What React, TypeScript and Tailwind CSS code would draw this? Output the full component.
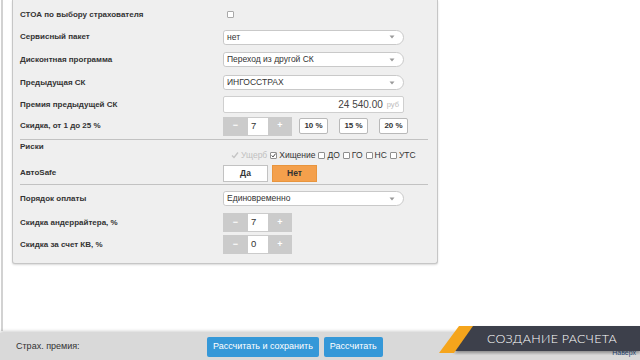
import React from 'react';

const font = { fontFamily: '"Liberation Sans", Arial, sans-serif' };

function Label({ children }: { children: React.ReactNode }) {
    return <div className="w-[203px] shrink-0 text-[8px] font-bold text-[#333]">{children}</div>;
}

function Caret() {
    return (
        <svg width="6" height="4" viewBox="0 0 6 4">
            <path d="M0.5 0.5 L5.5 0.5 L3 3.5 Z" fill="#9a9a9a" />
        </svg>
    );
}

function Select({ value }: { value: string }) {
    return (
        <div className="flex h-[15px] w-[181px] items-center justify-between rounded-l-[3px] rounded-r-[8px] border border-[#c9c9c9] bg-white pl-[3px] pr-[8px] text-[8.5px] text-[#333]">
            <span>{value}</span>
            <Caret />
        </div>
    );
}

function Spinner({ value }: { value: string }) {
    return (
        <div className="flex h-[19px]">
            <div className="flex w-[25px] items-center justify-center bg-[#cbcbcb] text-[9px] font-bold text-white">−</div>
            <div className="flex w-[20px] items-center border-y border-[#cbcbcb] bg-white pl-[3px] text-[9.5px] text-[#333]">
                {value}
            </div>
            <div className="flex w-[24px] items-center justify-center bg-[#cbcbcb] text-[9px] font-bold text-white">+</div>
        </div>
    );
}

function Box({ checked, disabled }: { checked?: boolean; disabled?: boolean }) {
    if (disabled) {
        return (
            <svg width="8" height="8" viewBox="0 0 8 8" className="mr-[2px]">
                <path d="M1 4.5 L3 6.5 L7 1.5" stroke="#c4c4c4" strokeWidth="1.3" fill="none" />
            </svg>
        );
    }
    return (
        <span className="mr-[2px] flex h-[7px] w-[7px] items-center justify-center rounded-[1px] border border-[#8f8f8f] bg-white">
            {checked && (
                <svg width="7" height="7" viewBox="0 0 7 7">
                    <path d="M1 3.5 L2.8 5.5 L6.5 0.8" stroke="#333" strokeWidth="1.3" fill="none" />
                </svg>
            )}
        </span>
    );
}

function Pct({ children }: { children: React.ReactNode }) {
    return (
        <div className="flex h-[16px] w-[29px] items-center justify-center rounded-[2px] border border-[#b9b9b9] bg-white text-[8px] font-bold text-[#333]">
            {children}
        </div>
    );
}

export default function App() {
    return (
        <div className="relative flex h-[360px] w-[640px] flex-col overflow-hidden bg-white" style={font}>
            <div className="flex-1 pl-[1px]">
                <div className="h-[331px] border-l-2 border-[#d2d2d2] pl-[9px]">
                    <div className="w-[426px] rounded-b-[3px] border border-t-0 border-[#c6c6c6] bg-[#efefef] pl-[7px] pr-[9px] pt-[3px] pb-[7px] shadow-[0_1px_2px_rgba(0,0,0,0.15)]">
                        <div className="flex h-[23px] items-center">
                            <Label>СТОА по выбору страхователя</Label>
                            <span className="ml-[4px] h-[7px] w-[7px] rounded-[1px] border border-[#a9a9a9] bg-white" />
                        </div>
                        <div className="flex h-[22px] items-center">
                            <Label>Сервисный пакет</Label>
                            <Select value="нет" />
                        </div>
                        <div className="flex h-[23px] items-center">
                            <Label>Дисконтная программа</Label>
                            <Select value="Переход из другой СК" />
                        </div>
                        <div className="flex h-[23px] items-center">
                            <Label>Предыдущая СК</Label>
                            <Select value="ИНГОССТРАХ" />
                        </div>
                        <div className="flex h-[21px] items-center">
                            <Label>Премия предыдущей СК</Label>
                            <div className="flex h-[17px] w-[181px] items-center justify-end rounded-[2px] border border-[#cfcfcf] bg-white pr-[4px]">
                                <span className="text-[10px] text-[#444]">24 540.00</span>
                                <span className="ml-[4px] text-[7.5px] text-[#bbb]">руб</span>
                            </div>
                        </div>
                        <div className="flex h-[22px] items-center">
                            <Label>Скидка, от 1 до 25 %</Label>
                            <Spinner value="7" />
                            <div className="ml-[7px] flex gap-[11px]">
                                <Pct>10 %</Pct>
                                <Pct>15 %</Pct>
                                <Pct>20 %</Pct>
                            </div>
                        </div>
                        <div className="mt-[2px] border-t border-[#c2c2c2]" />
                        <div className="flex h-[22px] items-start">
                            <div className="pt-[1px]">
                                <Label>Риски</Label>
                            </div>
                            <div className="ml-[8px] mt-[9px] flex items-center text-[8.5px] text-[#333]">
                                <Box disabled />
                                <span className="mr-[3px] text-[#c0c0c0]">Ущерб</span>
                                <Box checked />
                                <span className="mr-[3px]">Хищение</span>
                                <Box />
                                <span className="mr-[3px]">ДО</span>
                                <Box />
                                <span className="mr-[3px]">ГО</span>
                                <Box />
                                <span className="mr-[3px]">НС</span>
                                <Box />
                                <span>УТС</span>
                            </div>
                        </div>
                        <div className="flex h-[22px] items-center">
                            <Label>AвтоSafe</Label>
                            <div className="flex gap-[4px]">
                                <div className="flex h-[17px] w-[45px] items-center justify-center border border-[#c2c2c2] bg-white text-[8.5px] font-bold text-[#333]">
                                    Да
                                </div>
                                <div className="flex h-[17px] w-[45px] items-center justify-center border border-[#e8953e] bg-[#f4a04c] text-[8.5px] font-bold text-[#333]">
                                    Нет
                                </div>
                            </div>
                        </div>
                        <div className="border-t border-[#c2c2c2]" />
                        <div className="flex h-[27px] items-center">
                            <Label>Порядок оплаты</Label>
                            <Select value="Единовременно" />
                        </div>
                        <div className="flex h-[21px] items-center">
                            <Label>Скидка андеррайтера, %</Label>
                            <Spinner value="7" />
                        </div>
                        <div className="flex h-[23px] items-center">
                            <Label>Скидка за счет КВ, %</Label>
                            <Spinner value="0" />
                        </div>
                    </div>
                </div>
            </div>

            <div className="flex h-[27px] items-center bg-[#d9d9d9] pl-[16px] shadow-[0_-2px_3px_rgba(0,0,0,0.18)]">
                <span className="w-[191px] text-[9px] text-[#333]">Страх. премия:</span>
                <button className="h-[20px] rounded-[2px] bg-[#3598d8] px-[6px] text-[9px] text-white">Рассчитать и сохранить</button>
                <button className="ml-[5px] h-[20px] rounded-[2px] bg-[#3598d8] px-[6px] text-[9px] text-white">Рассчитать</button>
                <span className="ml-auto mr-[4px] mt-[14px] text-[7px] text-[#2a4a7a]">Наверх</span>
            </div>

            <div className="absolute left-[436px] top-[325px] h-[30px] w-[204px]">
                <svg width="204" height="30" viewBox="0 0 204 30" className="absolute left-0 top-0">
                    <defs>
                        <filter id="sh" x="-10%" y="-30%" width="120%" height="160%">
                            <feDropShadow dx="0" dy="2" stdDeviation="1.5" floodOpacity="0.35" />
                        </filter>
                    </defs>
                    <polygon points="36,1 204,1 204,26 18,26" fill="#3d404c" filter="url(#sh)" />
                    <polygon points="23,1 37,1 18,28 3,28" fill="#f5a51c" />
                </svg>
                <span
                    className="absolute left-[51px] top-[5px] text-[12.5px] tracking-[0.3px] text-white"
                    style={{ fontFamily: '"Lato", "Open Sans", sans-serif', fontWeight: 300 }}
                >
                    СОЗДАНИЕ РАСЧЕТА
                </span>
            </div>
        </div>
    );
}
